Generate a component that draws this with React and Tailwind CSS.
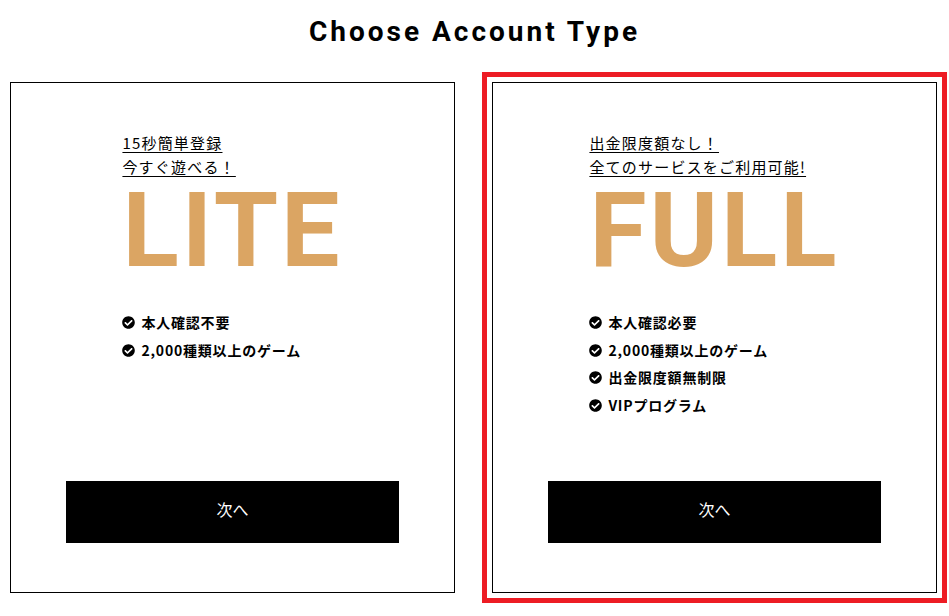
import { FaCheckCircle } from 'react-icons/fa'

const PLANS = [
  {
    key: 'lite',
    lead: ['15秒簡単登録', '今すぐ遊べる！'],
    title: 'LITE',
    features: ['本人確認不要', '2,000種類以上のゲーム'],
    selected: false,
  },
  {
    key: 'full',
    lead: ['出金限度額なし！', '全てのサービスをご利用可能!'],
    title: 'FULL',
    features: ['本人確認必要', '2,000種類以上のゲーム', '出金限度額無制限', 'VIPプログラム'],
    selected: true,
  },
]

const jp = { fontFamily: '"Noto Sans CJK JP", "Noto Sans", sans-serif' }

function PlanCard({ plan }) {
  return (
    <div
      className={`w-[445px] h-[511px] shrink-0 flex flex-col bg-white border border-black ${
        plan.selected ? 'outline-5 outline-offset-[5px] outline-[#ed1c24]' : ''
      }`}
    >
      <div className="mx-auto w-fit pt-[48px] flex flex-col">
        <div className="flex flex-col items-start text-[15px] leading-[24px] tracking-[1.2px] text-black" style={jp}>
          {plan.lead.map(line => (
            <span key={line} className="underline underline-offset-[3px] decoration-1">{line}</span>
          ))}
        </div>
        <div className="font-[Roboto,sans-serif] font-bold text-[104px] leading-none text-[#dba563] tracking-[3px]">
          {plan.title}
        </div>
        <ul className="mt-[26px] flex flex-col" style={jp}>
          {plan.features.map(f => (
            <li key={f} className="flex items-center gap-[6px] h-[27.5px] text-[14px] font-bold tracking-[0.8px] text-black">
              <FaCheckCircle className="w-[13px] h-[13px] shrink-0" />
              <span>{f}</span>
            </li>
          ))}
        </ul>
      </div>
      <button
        className="mt-auto mb-[49px] mx-auto w-3/4 h-[62px] pb-[6px] bg-black text-white text-[16px] flex items-center justify-center"
        style={jp}
      >
        次へ
      </button>
    </div>
  )
}

export default function App() {
  return (
    <div className="min-h-screen bg-white pt-[18px]">
      <h1 className="text-center font-[Roboto,sans-serif] font-bold text-[28px] leading-none tracking-[3px] text-black">
        Choose Account Type
      </h1>
      <div className="mt-[36px] px-[10px] flex gap-[37px]">
        {PLANS.map(plan => (
          <PlanCard key={plan.key} plan={plan} />
        ))}
      </div>
    </div>
  )
}
